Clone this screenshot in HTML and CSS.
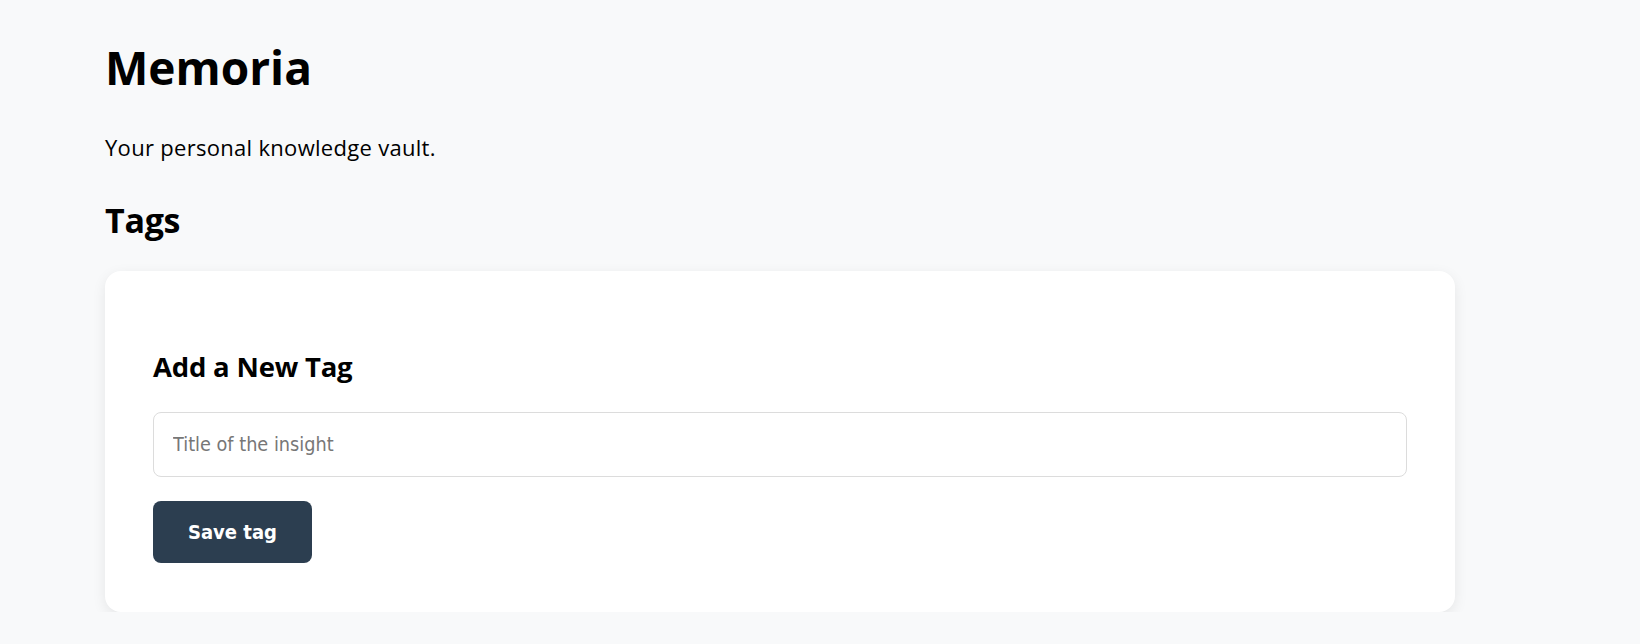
FILE: index.html
```html
<!DOCTYPE html>
<html lang="en">
<head>
<meta charset="utf-8">
<title>Memoria</title>
<link rel="stylesheet" href="styles.css">
</head>
<body>
<main class="page">
  <h1 class="title">Memoria</h1>
  <p class="tagline">Your personal knowledge vault.</p>
  <h2 class="section-title">Tags</h2>
  <section class="card">
    <h3 class="card-title">Add a New Tag</h3>
    <input class="text-input" type="text" placeholder="Title of the insight">
    <button class="btn-primary" type="button">Save tag</button>
  </section>
</main>
</body>
</html>
```

FILE: styles.css
```css
html, body {
  margin: 0;
  padding: 0;
  background: #f8f9fa;
}

body {
  font-family: "Open Sans", "Noto Sans", sans-serif;
  color: #000;
}

.page {
  width: 1350px;
  margin-left: 105px;
  display: flex;
  flex-direction: column;
  align-items: stretch;
}

.title {
  margin: 39px 0 0;
  font-size: 46px;
  line-height: 56px;
  font-weight: 700;
}

.tagline {
  margin: 37px 0 0;
  font-size: 22px;
  line-height: 30px;
  font-weight: 400;
  letter-spacing: 0.3px;
}

.section-title {
  margin: 36px 0 0;
  font-size: 34px;
  line-height: 44px;
  font-weight: 700;
  letter-spacing: -0.3px;
}

.card {
  margin-top: 29px;
  background: #fff;
  border-radius: 16px;
  box-shadow: 0 4px 14px rgba(0, 0, 0, 0.08);
  padding: 48px 48px 49px;
  display: flex;
  flex-direction: column;
  align-items: flex-start;
}

.card-title {
  margin: 30px 0 0;
  font-size: 27.5px;
  line-height: 36px;
  font-weight: 700;
  letter-spacing: -0.2px;
}

.text-input {
  margin-top: 27px;
  box-sizing: border-box;
  width: 100%;
  height: 65px;
  padding: 0 19px;
  border: 1px solid #dcdcdc;
  border-radius: 8px;
  background: #fff;
  font-family: "DejaVu Sans Condensed", "DejaVu Sans", sans-serif;
  font-size: 19.7px;
  color: #333;
  outline: none;
}

.text-input::placeholder {
  color: #777;
}

.btn-primary {
  margin-top: 24px;
  box-sizing: border-box;
  height: 62px;
  padding: 0 35px;
  border: none;
  border-radius: 8px;
  background: #2c3e50;
  color: #fff;
  font-family: "DejaVu Sans Condensed", "DejaVu Sans", sans-serif;
  font-weight: 700;
  font-size: 20px;
  cursor: pointer;
}
```
